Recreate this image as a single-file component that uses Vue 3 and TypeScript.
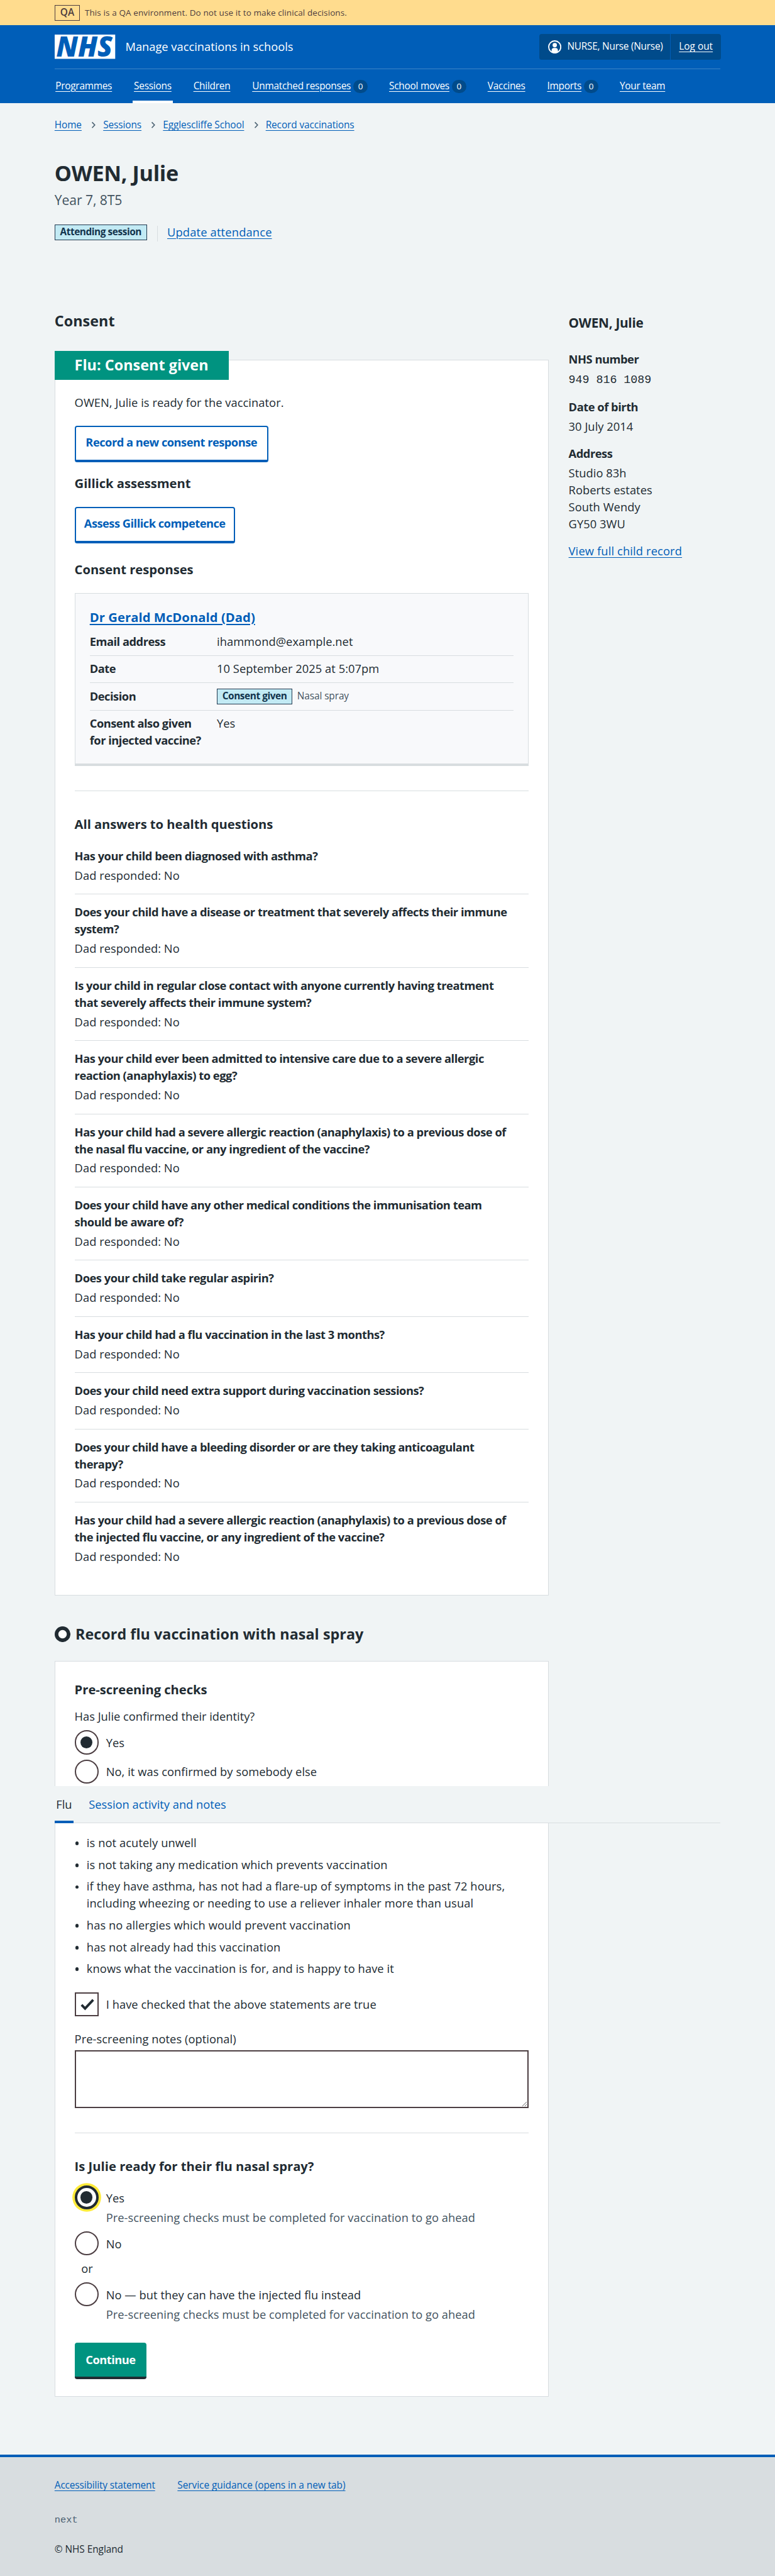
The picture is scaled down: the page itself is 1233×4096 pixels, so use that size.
<script setup lang="ts">
import { ref } from 'vue'

interface NavItem {
  label: string
  count?: number
  current?: boolean
}

const navItems: NavItem[] = [
  { label: 'Programmes' },
  { label: 'Sessions', current: true },
  { label: 'Children' },
  { label: 'Unmatched responses', count: 0 },
  { label: 'School moves', count: 0 },
  { label: 'Vaccines' },
  { label: 'Imports', count: 0 },
  { label: 'Your team' },
]

const crumbs: string[] = ['Home', 'Sessions', 'Egglescliffe School', 'Record vaccinations']

const healthQuestions: string[] = [
  'Has your child been diagnosed with asthma?',
  'Does your child have a disease or treatment that severely affects their immune system?',
  'Is your child in regular close contact with anyone currently having treatment that severely affects their immune system?',
  'Has your child ever been admitted to intensive care due to a severe allergic reaction (anaphylaxis) to egg?',
  'Has your child had a severe allergic reaction (anaphylaxis) to a previous dose of the nasal flu vaccine, or any ingredient of the vaccine?',
  'Does your child have any other medical conditions the immunisation team should be aware of?',
  'Does your child take regular aspirin?',
  'Has your child had a flu vaccination in the last 3 months?',
  'Does your child need extra support during vaccination sessions?',
  'Does your child have a bleeding disorder or are they taking anticoagulant therapy?',
  'Has your child had a severe allergic reaction (anaphylaxis) to a previous dose of the injected flu vaccine, or any ingredient of the vaccine?',
]

const statements: string[] = [
  'is not acutely unwell',
  'is not taking any medication which prevents vaccination',
  'if they have asthma, has not had a flare-up of symptoms in the past 72 hours, including wheezing or needing to use a reliever inhaler more than usual',
  'has no allergies which would prevent vaccination',
  'has not already had this vaccination',
  'knows what the vaccination is for, and is happy to have it',
]

const identityConfirmed = ref<'yes' | 'no'>('yes')
const ready = ref<'yes' | 'no' | 'injection'>('yes')
const checked = ref(true)
const notes = ref('')
</script>

<template>
  <div class="page">
    <div class="env">
      <div class="wrap env-in">
        <span class="env-tag">QA</span>
        <span>This is a QA environment. Do not use it to make clinical decisions.</span>
      </div>
    </div>

    <header class="header">
      <div class="wrap">
        <div class="brand-row">
          <svg class="logo" width="100" height="40" viewBox="0 0 100 40" role="img" aria-label="NHS">
            <rect width="100" height="40" fill="#fff" />
            <text x="2.5" y="36.2" textLength="93" lengthAdjust="spacingAndGlyphs">NHS</text>
          </svg>
          <span class="service">Manage vaccinations in schools</span>
          <div class="account">
            <div class="account-user">
              <svg width="22" height="22" viewBox="0 0 22 22" aria-hidden="true">
                <circle cx="11" cy="11" r="10" fill="none" stroke="#fff" stroke-width="1.9" />
                <circle cx="11" cy="8" r="3.6" fill="#fff" />
                <path d="M5.8 19.2v-2.4a4 4 0 0 1 4-4h2.4a4 4 0 0 1 4 4v2.4a10 10 0 0 1-10.4 0z" fill="#fff" />
              </svg>
              <span>NURSE, Nurse (Nurse)</span>
            </div>
            <a class="account-out" href="#">Log out</a>
          </div>
        </div>
        <nav class="nav">
          <div v-for="n in navItems" :key="n.label" class="nav-item" :class="{ current: n.current }">
            <a href="#">{{ n.label }}</a>
            <span v-if="n.count !== undefined" class="count">{{ n.count }}</span>
          </div>
        </nav>
      </div>
    </header>

    <main class="wrap main">
      <nav class="crumbs">
        <template v-for="(c, i) in crumbs" :key="c">
          <svg v-if="i > 0" width="8" height="12" viewBox="0 0 8 12" aria-hidden="true">
            <path d="M1.6 1.4 6 6 1.6 10.6" fill="none" stroke="#4c6272" stroke-width="1.7" />
          </svg>
          <a href="#">{{ c }}</a>
        </template>
      </nav>
      <h1>OWEN, Julie</h1>
      <p class="year">Year 7, 8T5</p>
      <div class="attendance">
        <span class="tag">Attending session</span>
        <a href="#">Update attendance</a>
      </div>

      <div class="columns">
        <div class="left">
          <h2 class="consent-title">Consent</h2>
          <section class="card">
            <div class="status">Flu: Consent given</div>
            <p class="ready">OWEN, Julie is ready for the vaccinator.</p>
            <button class="btn b1">Record a new consent response</button>
            <h3 class="gillick">Gillick assessment</h3>
            <button class="btn b2">Assess Gillick competence</button>
            <h3 class="responses">Consent responses</h3>

            <div class="inner">
              <h3><a href="#">Dr Gerald McDonald (Dad)</a></h3>
              <dl class="summary">
                <div><dt>Email address</dt><dd>ihammond@example.net</dd></div>
                <div><dt>Date</dt><dd>10 September 2025 at 5:07pm</dd></div>
                <div>
                  <dt>Decision</dt>
                  <dd class="decision"><span class="tag">Consent given</span><small>Nasal spray</small></dd>
                </div>
                <div><dt>Consent also given for injected vaccine?</dt><dd>Yes</dd></div>
              </dl>
            </div>

            <hr />
            <h3 class="answers">All answers to health questions</h3>
            <dl class="questions">
              <div v-for="q in healthQuestions" :key="q">
                <dt>{{ q }}</dt>
                <dd>Dad responded: No</dd>
              </div>
            </dl>
          </section>

          <h2 class="record-title">
            <svg width="26" height="26" viewBox="0 0 26 26" aria-hidden="true">
              <circle cx="13" cy="13" r="10" fill="#fff" stroke="#212b32" stroke-width="6" />
            </svg>
            Record flu vaccination with nasal spray
          </h2>
          <section class="card form">
            <h3>Pre-screening checks</h3>
            <p class="identity">Has Julie confirmed their identity?</p>
            <label class="choice">
              <input v-model="identityConfirmed" type="radio" value="yes" /><span class="dot"></span>Yes
            </label>
            <label class="choice">
              <input v-model="identityConfirmed" type="radio" value="no" /><span class="dot"></span>No, it was confirmed by somebody else
            </label>

            <nav class="tabs">
              <a class="tab active" href="#">Flu</a>
              <a class="tab" href="#">Session activity and notes</a>
            </nav>

            <ul class="statements">
              <li v-for="s in statements" :key="s">{{ s }}</li>
            </ul>
            <label class="choice check">
              <input v-model="checked" type="checkbox" />
              <span class="box">
                <svg width="40" height="40" viewBox="0 0 40 40" aria-hidden="true">
                  <path d="M11.2 20.6 17 26.6 30.4 12.4" fill="none" stroke="#212b32" stroke-width="4" />
                </svg>
              </span>
              I have checked that the above statements are true
            </label>
            <label class="notes-label" for="notes">Pre-screening notes (optional)</label>
            <textarea id="notes" v-model="notes"></textarea>

            <hr />
            <h3 class="ready-title">Is Julie ready for their flu nasal spray?</h3>
            <label class="choice focus">
              <input v-model="ready" type="radio" value="yes" /><span class="dot"></span>Yes
            </label>
            <p class="hint">Pre-screening checks must be completed for vaccination to go ahead</p>
            <label class="choice after-hint">
              <input v-model="ready" type="radio" value="no" /><span class="dot"></span>No
            </label>
            <p class="or">or</p>
            <label class="choice after-or">
              <input v-model="ready" type="radio" value="injection" /><span class="dot"></span>No — but they can have the injected flu instead
            </label>
            <p class="hint">Pre-screening checks must be completed for vaccination to go ahead</p>
            <button class="continue">Continue</button>
          </section>
        </div>

        <aside class="side">
          <h3>OWEN, Julie</h3>
          <dl>
            <dt>NHS number</dt>
            <dd class="mono">949 816 1089</dd>
            <dt>Date of birth</dt>
            <dd>30 July 2014</dd>
            <dt>Address</dt>
            <dd>Studio 83h<br />Roberts estates<br />South Wendy<br />GY50 3WU</dd>
          </dl>
          <a href="#">View full child record</a>
        </aside>
      </div>
    </main>

    <footer class="footer">
      <div class="wrap">
        <div class="footer-links">
          <a href="#">Accessibility statement</a>
          <a href="#">Service guidance (opens in a new tab)</a>
        </div>
        <p class="release">next</p>
        <p class="copyright">© NHS England</p>
      </div>
    </footer>
  </div>
</template>

<style>
body {
  background: #f0f4f5;
}
</style>

<style scoped>
.page {
  zoom: 0.9631;
  height: 4252.9px;
  overflow: hidden;
  display: flex;
  flex-direction: column;
  background: #f0f4f5;
  color: #212b32;
  font: 400 19px/28px "Open Sans", "Noto Sans", sans-serif;
  letter-spacing: 0.06px;
}
.page *,
.page *::before,
.page *::after {
  box-sizing: border-box;
}
h1, h2, h3, p, dl, dt, dd, ul { margin: 0; padding: 0; }
h1, h2, h3, dt { font-weight: 700; }
h2 { font-size: 24.2px; line-height: 32px; }
h3 { font-size: 21px; line-height: 28px; letter-spacing: -0.05px; }
a {
  color: #005eb8;
  text-decoration: underline;
  text-decoration-thickness: 1.05px;
  text-underline-offset: 3px;
}
.wrap { width: 1100px; margin: 0 auto; }

.env {
  height: 42px;
  background: #ffdc8e;
  color: #4d3d3f;
  font-size: 14px;
  line-height: 24px;
  letter-spacing: 0.12px;
  flex: none;
}
.env-in { display: flex; align-items: center; height: 42px; gap: 8px; }
.env-tag {
  width: 42px;
  height: 26px;
  border: 1.1px solid #4d3d3f;
  font-size: 16px;
  font-weight: 600;
  line-height: 23px;
  text-align: center;
}

.header { height: 128px; background: #005eb8; flex: none; }
.brand-row {
  display: flex;
  align-items: center;
  height: 72px;
  border-bottom: 1.1px solid #3e85c6;
}
.logo { flex: none; overflow: visible; }
.logo text {
  font: italic 800 46.5px "Open Sans", sans-serif;
  letter-spacing: 0;
  fill: #005eb8;
}
.service { color: #fff; margin-left: 17px; letter-spacing: 0; }
.account {
  display: flex;
  width: 300px;
  height: 42px;
  margin-left: auto;
  margin-right: -1px;
  border-radius: 4px;
  background: #004b8b;
  color: #fff;
  font-size: 16px;
  letter-spacing: -0.25px;
}
.account-user {
  display: flex;
  align-items: center;
  width: 217px;
  padding-left: 14px;
  gap: 10px;
  border-right: 1.1px solid #005eb8;
  white-space: nowrap;
}
.account-out { margin: auto; color: #fff; letter-spacing: 0; }
.nav {
  display: flex;
  gap: 31.4px;
  height: 56px;
  margin-left: -1px;
  font-size: 16px;
  letter-spacing: -0.25px;
}
.nav-item {
  display: flex;
  align-items: center;
  gap: 4px;
  padding: 5px 2.4px 0;
  border-bottom: 4.2px solid transparent;
  white-space: nowrap;
}
.nav-item.current { border-bottom-color: #fff; }
.nav-item a { color: #fff; }
.count {
  width: 24px;
  height: 22px;
  margin-right: -1px;
  border-radius: 11px;
  background: #004b8b;
  color: #fff;
  font-size: 14px;
  line-height: 22px;
  text-align: center;
}

.main { height: 3883px; flex: none; }
.crumbs {
  display: flex;
  align-items: center;
  gap: 12.8px;
  padding-top: 24.5px;
  font-size: 16px;
  line-height: 24px;
  letter-spacing: -0.1px;
}
.crumbs svg { margin: 0 0 0 3px; }
.crumbs svg + a { margin-left: -1px; }
h1 { margin-top: 47.5px; font-size: 35.5px; line-height: 40px; letter-spacing: -0.35px; }
.year { margin-top: 8.5px; font-size: 22px; line-height: 32px; color: #43535f; letter-spacing: -0.1px; }
.attendance { display: flex; align-items: center; height: 26px; margin-top: 24.5px; }
.attendance a { margin-left: 16px; letter-spacing: 0.18px; }
.tag {
  display: inline-block;
  flex: none;
  height: 26px;
  padding: 0 8px;
  border: 1.1px solid #21394f;
  background: #c2eaf4;
  color: #12344d;
  font-size: 16px;
  font-weight: 700;
  line-height: 23.5px;
  letter-spacing: -0.45px;
  white-space: nowrap;
}
.attendance .tag { width: 153px; }
.attendance .tag + a::before {
  content: "";
  display: inline-block;
  width: 1.1px;
  height: 26px;
  margin-right: 16px;
  background: #d8dde0;
  vertical-align: middle;
}

.columns { display: flex; margin-top: 103px; }
.left { position: relative; width: 817px; }
.consent-title { margin-top: 14.3px; }
.card {
  position: relative;
  margin-top: 47.7px;
  padding: 0 32px 49.4px;
  border: 1.1px solid #d8dde0;
  background: #fff;
}
.status {
  width: 288px;
  height: 48px;
  margin: -16px 0 0 -33px;
  padding: 8px 0 0 33px;
  background: #009380;
  color: #fff;
  font-size: 24.2px;
  font-weight: 700;
  line-height: 32px;
}
.ready { margin-top: 23.6px; }
.btn {
  display: flex;
  justify-content: center;
  align-items: flex-start;
  height: 60px;
  padding: 11.6px 0 0;
  border: 2.1px solid #005eb8;
  border-bottom-width: 4.2px;
  border-radius: 4px;
  background: #fff;
  color: #005eb8;
  font: 700 19px/28px "Open Sans", sans-serif;
  letter-spacing: -0.53px;
  white-space: nowrap;
}
.b1 { width: 320px; margin-top: 24.4px; }
.gillick { margin-top: 20.8px; }
.b2 { width: 265px; margin-top: 25.2px; }
.responses { margin-top: 28.8px; }
.inner {
  height: 286px;
  margin-top: 25.2px;
  padding: 24.8px 24px 0;
  border: 1.1px solid #d8dde0;
  border-bottom-width: 4.2px;
  background: #f8f9fb;
}
.inner h3 a { text-decoration-thickness: 2.1px; }
.inner h3 { letter-spacing: 0.05px; }
.summary { margin-top: 5.2px; }
.summary > div {
  display: flex;
  min-height: 45px;
  padding-top: 7.6px;
  border-bottom: 1.1px solid #d8dde0;
}
.summary > div:last-child { border-bottom: 0; }
.summary dt { width: 210px; padding-right: 16px; flex: none; letter-spacing: -0.5px; }
.summary .decision { display: flex; align-items: center; margin-top: -7.6px; gap: 8px; height: 44px; }
.decision small { font-size: 16px; letter-spacing: -0.1px; color: #43535f; }
hr {
  height: 1.1px;
  margin: 40px 0 0;
  border: 0;
  background: #d8dde0;
}
.answers { margin-top: 40.8px; }
.questions { margin-top: 9.2px; }
.questions > div { padding: 15.6px 0 16.25px; border-bottom: 1px solid #d8dde0; }
.questions > div:last-child { border: 0; padding-bottom: 0; }
.questions dt { padding-right: 28px; letter-spacing: -0.48px; }
.questions dd { margin-top: 4px; }

.record-title { display: flex; align-items: center; gap: 8.5px; margin-top: 47.3px; white-space: nowrap; }
.form { margin-top: 28px; padding: 32.8px 32px 28px; }
.identity { margin: 16.8px 0 8.4px; letter-spacing: 0; }
.choice { display: flex; align-items: center; height: 40px; margin-bottom: 8px; padding-top: 2px; }
.choice input { position: absolute; opacity: 0; }
.dot,
.box {
  display: block;
  flex: none;
  width: 40px;
  height: 40px;
  margin: 0 12px 2px 0;
  border: 2.1px solid #4c3e42;
  background: #fff;
}
.dot {
  display: flex;
  border-radius: 50%;
}
input:checked + .dot::before {
  content: "";
  width: 20px;
  height: 20px;
  margin: auto;
  border-radius: 50%;
  background: #212b32;
}
.focus .dot { border: 4.2px solid #212b32; box-shadow: 0 0 0 4px #ffeb3b; }
.box svg { display: block; margin: -2px; }
.tabs {
  position: absolute;
  z-index: 2;
  top: 206px;
  left: -1px;
  display: flex;
  gap: 23px;
  width: 1100px;
  height: 61px;
  border-bottom: 1.1px solid #d8dde0;
  background: #f0f4f5;
}
.tab { height: 61px; padding: 16px 2.5px 0; text-decoration: none; white-space: nowrap; letter-spacing: 0; }
.tab.active { width: 31px; border-bottom: 4.2px solid #005eb8; color: #212b32; }
.statements { margin-top: 84px; list-style: none; }
.statements li { position: relative; padding-left: 20px; margin-bottom: 8px; letter-spacing: 0.09px; }
.statements li::before {
  content: "";
  position: absolute;
  left: 1px;
  top: 11.5px;
  width: 6px;
  height: 6px;
  border-radius: 50%;
  background: #212b32;
}
.statements li:last-child { margin-bottom: 0; }
.check { margin-top: 24px; margin-bottom: 23.6px; }
.notes-label { display: block; }
textarea {
  display: block;
  width: 100%;
  height: 96px;
  margin-top: 4.4px;
  border: 2.1px solid #4c3e42;
  background: #fff;
  resize: vertical;
}
.ready-title { margin: 40.8px 0 17.2px; letter-spacing: 0; }
.focus { margin-bottom: 0; }
.hint { margin: -0.4px 0 0 52px; color: #43535f; letter-spacing: 0.04px; }
.after-hint { margin-top: 8.4px; margin-bottom: 0; }
.or { margin-top: 7.6px; margin-left: 11px; }
.after-or { margin-top: 8.4px; margin-bottom: 0; }
.continue {
  display: block;
  width: 119px;
  height: 60px;
  margin-top: 32.4px;
  padding: 0;
  border: 0;
  border-bottom: 4.2px solid #212b32;
  border-radius: 4px;
  background: #009380;
  color: #fff;
  font: 700 19px/28px "Open Sans", sans-serif;
  letter-spacing: -0.53px;
}

.side { width: 251px; margin-left: 32.5px; padding-top: 19.5px; }
.side h3 { font-size: 21.6px; letter-spacing: -0.3px; margin-bottom: 32.1px; }
.side dt { margin-top: 17px; letter-spacing: -0.48px; }
.side dt:first-child { margin-top: 0; }
.side dd { margin: 4px 0 0; }
.side .mono { margin: 6.4px 0 -0.8px; font-family: "Liberation Mono", monospace; letter-spacing: 0; }
.side > a { display: inline-block; margin-top: 17px; letter-spacing: 0.15px; }

.footer { height: 200px; border-top: 4.2px solid #005eb8; background: #d8dde0; font-size: 16px; line-height: 24px; flex: none; }
.footer-links { display: flex; gap: 37px; padding-top: 34.3px; letter-spacing: -0.04px; }
.footer-links a:first-child { letter-spacing: -0.15px; }
.release { margin-top: 33.4px; font-family: "Liberation Mono", monospace; letter-spacing: 0; color: #4c6272; }
.copyright { margin-top: 24.4px; letter-spacing: -0.05px; }
</style>
